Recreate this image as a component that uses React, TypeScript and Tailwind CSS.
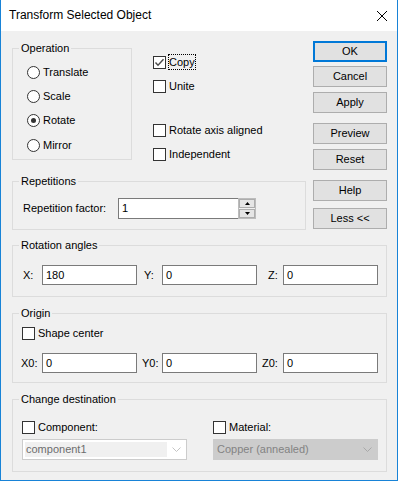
import React from "react";

// Win10-style "Transform Selected Object" dialog

function GroupBox({
  title,
  className,
  children,
}: {
  title: string;
  className: string;
  children?: React.ReactNode;
}) {
  return (
    <fieldset className={`border border-[#dcdcdc] ${className}`}>
      <legend className="ml-[6px] px-[2px] leading-[14px]">{title}</legend>
      {children}
    </fieldset>
  );
}

function Radio({ label, checked = false }: { label: string; checked?: boolean }) {
  return (
    <div className="flex h-[24px] items-center gap-[3px]">
      <span className="flex h-[13px] w-[13px] items-center justify-center rounded-full border border-[#333333] bg-white">
        {checked && <span className="h-[5px] w-[5px] rounded-full bg-[#333333]" />}
      </span>
      <span>{label}</span>
    </div>
  );
}

function Box({ checked = false }: { checked?: boolean }) {
  return (
    <span className="flex h-[13px] w-[13px] shrink-0 items-center justify-center border border-[#333333] bg-white">
      {checked && (
        <svg width="11" height="11" viewBox="0 0 11 11">
          <path d="M1.5 5.5 L4 8.2 L9.5 2.2" fill="none" stroke="#4a4a4a" strokeWidth="1.4" />
        </svg>
      )}
    </span>
  );
}

function Field({ value }: { value: string }) {
  return (
    <div className="flex h-[20px] w-[95px] items-center border border-[#7a7a7a] bg-white pl-[3px]">
      {value}
    </div>
  );
}

function Btn({ label, primary = false, className = "" }: { label: string; primary?: boolean; className?: string }) {
  return (
    <button
      type="button"
      className={`flex h-[21px] w-[74px] items-center justify-center bg-[#e1e1e1] ${
        primary ? "border-2 border-[#0078d7]" : "border border-[#adadad]"
      } ${className}`}
    >
      {label}
    </button>
  );
}

function Chevron({ color }: { color: string }) {
  return (
    <svg width="9" height="5" viewBox="0 0 9 5">
      <path d="M0.5 0.5 L4.5 4.5 L8.5 0.5" fill="none" stroke={color} strokeWidth="1" />
    </svg>
  );
}

export default function App() {
  return (
    <div className="flex h-[481px] w-[398px] flex-col border-x border-b border-[#1883d7] font-['Liberation_Sans',Arial,sans-serif] text-[11px] leading-[13px] text-black">
      {/* title bar */}
      <div className="flex h-[31px] shrink-0 items-center justify-between bg-white pl-[8px] pr-[10px]">
        <span className="text-[12px]">Transform Selected Object</span>
        <svg width="10" height="10" viewBox="0 0 10 10">
          <path d="M0 0 L10 10 M10 0 L0 10" stroke="#000" strokeWidth="1" />
        </svg>
      </div>

      <div className="flex flex-1 flex-col bg-[#f0f0f0] pl-[11px] pr-[10px] pt-[10px]">
        <div className="flex">
          <div className="flex w-[294px] flex-col">
            <div className="flex h-[119px] items-start">
              <GroupBox title="Operation" className="h-[119px] w-[120px] shrink-0">
                <div className="flex flex-col pl-[14px] pt-[5px]">
                  <Radio label="Translate" />
                  <Radio label="Scale" />
                  <Radio label="Rotate" checked />
                  <div className="mt-[1px]">
                    <Radio label="Mirror" />
                  </div>
                </div>
              </GroupBox>
              <div className="ml-[21px] flex flex-col pt-[11px]">
                <div className="flex h-[20px] shrink-0 items-center">
                  <Box checked />
                  <span className="ml-[2px] border border-dotted border-black leading-[14px]">Copy</span>
                </div>
                <div className="mt-[4px] flex h-[20px] shrink-0 items-center gap-[3px]">
                  <Box />
                  <span>Unite</span>
                </div>
                <div className="mt-[24px] flex h-[20px] shrink-0 items-center gap-[3px]">
                  <Box />
                  <span>Rotate axis aligned</span>
                </div>
                <div className="mt-[4px] flex h-[20px] shrink-0 items-center gap-[3px]">
                  <Box />
                  <span>Independent</span>
                </div>
              </div>
            </div>

            <GroupBox title="Repetitions" className="mt-[14px] h-[56px]">
              <div className="flex items-center pl-[10px] pt-[10px]">
                <span className="w-[95px]">Repetition factor:</span>
                <div className="flex h-[21px] w-[120px] items-center border border-r-0 border-[#7a7a7a] bg-white pl-[3px]">
                  1
                </div>
                <div className="flex h-[21px] w-[18px] flex-col gap-[1px] border border-[#bcbcbc] bg-[#f0f0f0]">
                  <div className="flex h-[9px] items-center justify-center border border-[#adadad] bg-[#e5e5e5]">
                    <svg width="5" height="3" viewBox="0 0 5 3">
                      <path d="M2.5 0 L5 3 L0 3 Z" fill="#000" />
                    </svg>
                  </div>
                  <div className="flex h-[9px] items-center justify-center border border-[#adadad] bg-[#e5e5e5]">
                    <svg width="5" height="3" viewBox="0 0 5 3">
                      <path d="M0 0 L5 0 L2.5 3 Z" fill="#000" />
                    </svg>
                  </div>
                </div>
              </div>
            </GroupBox>
          </div>

          <div className="ml-[7px] flex w-[74px] flex-col">
            <Btn label="OK" primary />
            <Btn label="Cancel" className="mt-[4px]" />
            <Btn label="Apply" className="mt-[5px]" />
            <Btn label="Preview" className="mt-[10px]" />
            <Btn label="Reset" className="mt-[5px]" />
            <Btn label="Help" className="mt-[10px]" />
            <Btn label="Less <<" className="mt-[7px]" />
          </div>
        </div>

        <GroupBox title="Rotation angles" className="mt-[8px] h-[59px]">
          <div className="flex items-center pl-[10px] pt-[13px]">
            <span className="w-[19px]">X:</span>
            <Field value="180" />
            <span className="ml-[7px] w-[18px]">Y:</span>
            <Field value="0" />
            <span className="ml-[11px] w-[15px]">Z:</span>
            <Field value="0" />
          </div>
        </GroupBox>

        <GroupBox title="Origin" className="mt-[9px] h-[77px]">
          <div className="flex flex-col pl-[8px] pt-[7px]">
            <div className="ml-[1px] flex h-[13px] items-center gap-[3px]">
              <Box />
              <span>Shape center</span>
            </div>
            <div className="mt-[13px] flex items-center">
              <span className="w-[21px]">X0:</span>
              <Field value="0" />
              <span className="ml-[5px] w-[20px]">Y0:</span>
              <Field value="0" />
              <span className="ml-[5px] w-[21px]">Z0:</span>
              <Field value="0" />
            </div>
          </div>
        </GroupBox>

        <GroupBox title="Change destination" className="mt-[9px] h-[80px]">
          <div className="flex gap-[26px] pl-[9px] pt-[15px]">
            <div className="flex w-[165px] flex-col">
              <div className="flex h-[13px] items-center gap-[3px]">
                <Box />
                <span>Component:</span>
              </div>
              <div className="mt-[5px] flex h-[21px] items-center border border-[#cccccc] bg-white">
                <div className="ml-[2px] flex h-[15px] w-[142px] items-center bg-[#f0f0f0] pl-[1px] text-[#6d6d6d]">
                  component1
                </div>
                <div className="flex flex-1 justify-center">
                  <Chevron color="#c4c4c4" />
                </div>
              </div>
            </div>
            <div className="flex w-[165px] flex-col">
              <div className="flex h-[13px] items-center gap-[3px]">
                <Box />
                <span>Material:</span>
              </div>
              <div className="mt-[5px] flex h-[21px] items-center border border-[#cccccc] bg-[#cccccc] pl-[3px] text-[#838383]">
                <span>Copper (annealed)</span>
                <span className="ml-auto mr-[5px] flex">
                  <Chevron color="#a8a8a8" />
                </span>
              </div>
            </div>
          </div>
        </GroupBox>
      </div>
    </div>
  );
}
